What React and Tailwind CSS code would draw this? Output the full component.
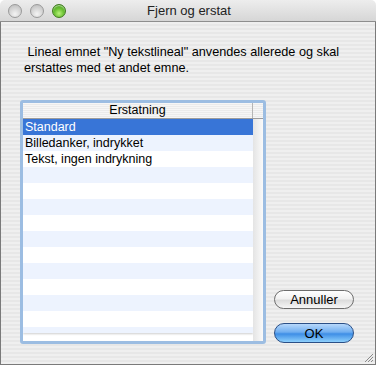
import React from 'react';

const rows = ['Standard', 'Billedanker, indrykket', 'Tekst, ingen indrykning'];

function Light({ green }) {
  return (
    <span
      className={
        green
          ? 'w-[14px] h-[14px] rounded-full border border-[#3f7a1e] bg-[radial-gradient(circle_at_50%_70%,#b8f27a_0%,#6cc234_45%,#3f9418_100%)] shadow-[inset_0_1px_1px_rgba(255,255,255,0.6)]'
          : 'w-[14px] h-[14px] rounded-full border border-[#9a9a9a] bg-[radial-gradient(circle_at_50%_75%,#f4f4f4_0%,#d6d6d6_50%,#b9b9b9_100%)]'
      }
    />
  );
}

export default function App() {
  const list = Array.from({ length: 14 }, (_, i) => rows[i] || '');

  return (
    <div className="w-[376px] h-[365px] flex flex-col overflow-hidden font-['Liberation_Sans',Arial,sans-serif] text-[13px] text-black">
      {/* title bar */}
      <div className="h-[22px] shrink-0 relative flex items-center rounded-t-[5px] border-b border-[#8e8e8e] bg-[linear-gradient(#ededed,#d6d6d6)]">
        <div className="flex gap-[8px] pl-[8px] pt-[1px]">
          <Light />
          <Light />
          <Light green />
        </div>
        <div className="absolute inset-0 flex items-center justify-center text-[13px] text-[#222] pl-[2px]">
          Fjern og erstat
        </div>
      </div>

      {/* body */}
      <div className="flex-1 flex flex-col border-x border-b border-[#7a7a7a] bg-[repeating-linear-gradient(180deg,#efefef_0px,#efefef_2px,#e7e7e7_2px,#e7e7e7_4px)] relative">
        <p className="pl-[23px] pt-[22px] leading-[16px] text-[12.7px] whitespace-pre">
          {' Lineal emnet "Ny tekstlineal" anvendes allerede og skal\nerstattes med et andet emne.'}
        </p>

        <div className="flex mt-[24px] pl-[19px]">
          {/* table with focus ring */}
          <div className="w-[246px] h-[244px] rounded-[3px] border-[3px] border-[#9cbde2] bg-white flex">
            <div className="flex-1 flex flex-col">
              <div className="h-[16px] shrink-0 flex border-b border-[#9c9c9c] bg-[repeating-linear-gradient(180deg,#f6f6f6_0px,#f6f6f6_1px,#ebebeb_1px,#ebebeb_2px)]">
                <div className="flex-1 flex items-center justify-center text-[12.5px] leading-none border-r border-[#b5b5b5]">
                  Erstatning
                </div>
                <div className="w-[10px]" />
              </div>
              <div className="flex flex-1 overflow-hidden">
                <div className="flex-1 flex flex-col shadow-[0_1px_2px_rgba(0,0,0,0.2)] h-[214px] overflow-hidden">
                  {list.map((r, i) => (
                    <div
                      key={i}
                      className={
                        'h-[16px] shrink-0 flex items-center pl-[2px] text-[12.5px] ' +
                        (i === 0
                          ? 'bg-[#3875d7] text-white'
                          : i % 2 === 1
                          ? 'bg-[#edf3fe]'
                          : 'bg-white')
                      }
                    >
                      {r}
                    </div>
                  ))}
                </div>
                <div className="w-[10px] bg-[linear-gradient(90deg,#e4e4e4,#fafafa)]" />
              </div>
            </div>
          </div>

          {/* buttons */}
          <div className="flex flex-col justify-end pl-[8px] pb-[1px] gap-[14px]">
            <button className="w-[80px] h-[19px] rounded-full border border-[#6d6d6d] bg-[linear-gradient(#ffffff,#f1f1f1_45%,#dcdcdc_55%,#f6f6f6)] text-[13px] leading-none text-black">
              Annuller
            </button>
            <button className="w-[80px] h-[20px] rounded-full border border-[#2b4f86] bg-[linear-gradient(#b7d8fb,#70aef0_45%,#3e8ee6_55%,#8ed0fc)] text-[13px] leading-none text-black">
              OK
            </button>
          </div>
        </div>

        {/* resize grip */}
        <svg className="absolute right-[1px] bottom-[1px]" width="11" height="11" viewBox="0 0 11 11">
          <path d="M10 2 L2 10 M10 5 L5 10 M10 8 L8 10" stroke="#8a8a8a" strokeWidth="1" />
        </svg>
      </div>
    </div>
  );
}
